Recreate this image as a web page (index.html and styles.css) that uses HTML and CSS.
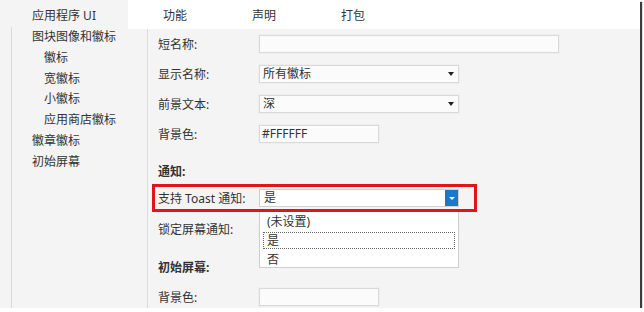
FILE: index.html
```html
<!DOCTYPE html>
<html>
<head>
    <meta charset="UTF-8">
    <title>应用程序 UI</title>
    <link rel="stylesheet" href="styles.css">
</head>
<body>
    <div class="window">
        <div class="tabs">
            <div class="tab active">应用程序 UI</div>
            <div class="tab">功能</div>
            <div class="tab">声明</div>
            <div class="tab">打包</div>
        </div>
        <div class="panes">
            <div class="side">
                <ul class="tree">
                    <li>图块图像和徽标</li>
                    <li class="sub">徽标</li>
                    <li class="sub">宽徽标</li>
                    <li class="sub">小徽标</li>
                    <li class="sub">应用商店徽标</li>
                    <li>徽章徽标</li>
                    <li>初始屏幕</li>
                </ul>
            </div>
            <div class="main">
                <div class="row">
                    <span class="label">短名称:</span>
                    <div class="field wide"></div>
                </div>
                <div class="row">
                    <span class="label">显示名称:</span>
                    <div class="field select">所有徽标</div>
                </div>
                <div class="row">
                    <span class="label">前景文本:</span>
                    <div class="field select">深</div>
                </div>
                <div class="row">
                    <span class="label">背景色:</span>
                    <div class="field short">#FFFFFF</div>
                </div>

                <div class="heading">通知:</div>
                <div class="alert">
                    <span class="label">支持 Toast 通知:</span>
                    <div class="field combo open">
                        是
                        <span class="drop"></span>
                        <ul class="list">
                            <li>(未设置)</li>
                            <li class="focus">是</li>
                            <li>否</li>
                        </ul>
                    </div>
                </div>
                <div class="row">
                    <span class="label">锁定屏幕通知:</span>
                    <div class="field select"></div>
                </div>

                <div class="heading second">初始屏幕:</div>
                <div class="row last">
                    <span class="label">背景色:</span>
                    <div class="field short"></div>
                </div>
            </div>
        </div>
    </div>
</body>
</html>
```

FILE: styles.css
```css
body {
    margin: 0;
    background: #fff;
    font-family: "Noto Sans", "Noto Sans CJK SC", sans-serif;
    font-size: 12px;
    color: #333;
}
.window {
    width: 640px;
    height: 308px;
    background: #f4f4f4;
    box-shadow: 2px 2px 1px #3c3c3c;
    display: flex;
    flex-direction: column;
    overflow: hidden;
}
.tabs {
    display: flex;
    height: 29px;
    flex: none;
    background: #fff;
}
.tab {
    width: 89px;
    box-sizing: border-box;
    padding: 2px 0 0 35px;
    line-height: 27px;
}
.tab.active {
    width: 128px;
    padding-left: 32px;
    background: #f4f4f4;
}
.panes {
    flex: 1;
    display: flex;
}
.side {
    width: 136px;
    padding-left: 11px;
    border-right: 1px solid #dcdcdc;
    flex: none;
}
.tree {
    list-style: none;
    margin: 0;
    padding: 0 0 0 20px;
    height: 100%;
    border-left: 1px solid #dadada;
}
.tree li {
    line-height: 20.8px;
}
.tree li:first-child {
    margin-top: -2px;
}
.tree .sub {
    padding-left: 12px;
}
.main {
    flex: 1;
    padding-left: 10px;
}
.row {
    display: flex;
    align-items: center;
    height: 30px;
}
.label {
    width: 101px;
    flex: none;
}
.field {
    position: relative;
    box-sizing: border-box;
    height: 18px;
    line-height: 16px;
    padding: 0 3px;
    border: 1px solid #d9d9d9;
    background: #fbfbfb;
    box-shadow: 0 0 0 1px #efefef;
}
.wide {
    width: 300px;
}
.short {
    width: 120px;
    padding-left: 2px;
}
.select,
.combo {
    width: 200px;
}
.select::after {
    content: "";
    position: absolute;
    right: 4px;
    top: 6px;
    border-left: 3px solid transparent;
    border-right: 3px solid transparent;
    border-top: 4px solid #222;
}
.heading {
    font-weight: bold;
    padding-top: 14px;
    line-height: 18px;
}
.heading.second {
    padding-top: 15px;
}
.row.last {
    margin-top: 5px;
}
.alert {
    display: flex;
    align-items: center;
    box-sizing: border-box;
    width: 325px;
    height: 28px;
    margin: 3px 0 2px -6px;
    padding-left: 3px;
    border: 3px solid #e3131b;
}
.combo {
    background: #fff;
    border-color: #d0d0d0;
    box-shadow: none;
    padding-left: 4px;
}
.drop {
    position: absolute;
    right: 0;
    top: 0;
    width: 13px;
    height: 16px;
    background: #1a78c8;
}
.drop::after {
    content: "";
    position: absolute;
    left: 4px;
    top: 7px;
    border-left: 3px solid transparent;
    border-right: 3px solid transparent;
    border-top: 3px solid #fff;
}
.list {
    position: absolute;
    z-index: 1;
    left: -1px;
    top: 22px;
    width: 200px;
    height: 56px;
    box-sizing: border-box;
    margin: 0;
    padding: 0;
    list-style: none;
    background: #fff;
    border: 1px solid #cfcfcf;
    border-top: none;
}
.list li {
    height: 19px;
    line-height: 19px;
    padding-left: 7px;
}
.list li.focus {
    height: 15px;
    line-height: 15px;
    margin: 1px 3px;
    padding-left: 3px;
    border: 1px dotted #666;
}
```
